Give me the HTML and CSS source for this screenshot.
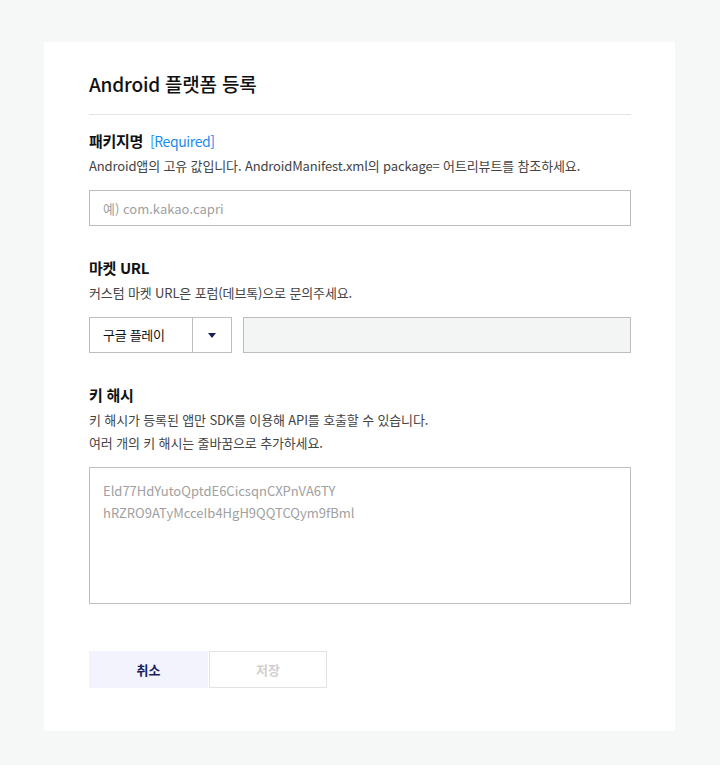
FILE: index.html
```html
<!DOCTYPE html>
<html lang="ko">
<head>
    <meta charset="UTF-8">
    <meta name="viewport" content="width=device-width, initial-scale=1.0">
    <title>Android 플랫폼 등록</title>
    <link rel="stylesheet" href="styles.css">
</head>
<body>
    <div class="card">
        <h2 class="title">Android 플랫폼 등록</h2>

        <div class="field first">
            <p class="label">패키지명 <span class="required">[Required]</span></p>
            <p class="desc">Android앱의 고유 값입니다. AndroidManifest.xml의 package= 어트리뷰트를 참조하세요.</p>
            <input class="text" type="text" placeholder="예) com.kakao.capri">
        </div>

        <div class="field">
            <p class="label">마켓 URL</p>
            <p class="desc">커스텀 마켓 URL은 포럼(데브톡)으로 문의주세요.</p>
            <div class="market">
                <div class="select">
                    <span class="select-text">구글 플레이</span>
                    <span class="select-arrow">
                        <svg width="8" height="5" viewBox="0 0 8 5"><path d="M0 0h8L4 5z" fill="#1b1e5c"/></svg>
                    </span>
                </div>
                <input class="text url" type="text" disabled>
            </div>
        </div>

        <div class="field">
            <p class="label">키 해시</p>
            <p class="desc">키 해시가 등록된 앱만 SDK를 이용해 API를 호출할 수 있습니다.<br>여러 개의 키 해시는 줄바꿈으로 추가하세요.</p>
            <textarea class="hash" placeholder="Eld77HdYutoQptdE6CicsqnCXPnVA6TY&#10;hRZRO9ATyMcceIb4HgH9QQTCQym9fBml"></textarea>
        </div>

        <div class="buttons">
            <button class="btn cancel">취소</button>
            <button class="btn save" disabled>저장</button>
        </div>
    </div>
</body>
</html>
```

FILE: styles.css
```css
body {
    margin: 0;
    background: #f6f7f7;
    font-family: "Noto Sans CJK KR", "Noto Sans", sans-serif;
    color: #111;
}

p { margin: 0; }

.card {
    margin: 42px 45px 34px 44px;
    background: #fff;
    padding: 28px 44px 43px 45px;
}

.title {
    margin: 0;
    font-size: 19px;
    font-weight: 500;
    line-height: 28px;
    padding-bottom: 16px;
    border-bottom: 1px solid #e4e4e4;
    letter-spacing: -0.2px;
}

.field { margin-top: 31px; }
.field.first { margin-top: 15px; }

.label {
    font-size: 15px;
    font-weight: 700;
    line-height: 22px;
    letter-spacing: -0.3px;
}

.required {
    color: #1a8cf0;
    font-weight: 400;
    font-size: 14px;
    margin-left: 3px;
    letter-spacing: -0.4px;
}

.desc {
    margin-top: 2px;
    font-size: 13px;
    line-height: 23px;
    color: #444;
    letter-spacing: -0.14px;
}

.text {
    display: block;
    box-sizing: border-box;
    width: 100%;
    height: 36px;
    margin-top: 13px;
    padding: 0 13px;
    border: 1px solid #bdbdbd;
    border-radius: 0;
    font-family: inherit;
    font-size: 13px;
    color: #333;
    outline: none;
}

.text::placeholder { color: #a0a0a0; }

.market {
    display: flex;
    gap: 11px;
    margin-top: 13px;
}

.select {
    display: flex;
    box-sizing: border-box;
    width: 143px;
    height: 36px;
    border: 1px solid #bdbdbd;
    flex-shrink: 0;
}

.select-text {
    flex: 1;
    padding-left: 13px;
    font-size: 13px;
    line-height: 34px;
    letter-spacing: -0.3px;
    border-right: 1px solid #bdbdbd;
}

.select-arrow {
    width: 38px;
    display: flex;
    align-items: center;
    justify-content: center;
}

.text.url {
    margin-top: 0;
    flex: 1;
    background: #f3f4f4;
}

.hash {
    display: block;
    box-sizing: border-box;
    width: 100%;
    height: 137px;
    margin-top: 13px;
    padding: 12px 13px;
    border: 1px solid #bdbdbd;
    border-radius: 0;
    resize: none;
    font-family: inherit;
    font-size: 13px;
    line-height: 22px;
    outline: none;
}

.hash::placeholder { color: #a0a0a0; }

.buttons {
    display: flex;
    margin-top: 47px;
}

.btn {
    box-sizing: border-box;
    width: 119px;
    height: 37px;
    border: 1px solid transparent;
    font-family: inherit;
    font-size: 13px;
    font-weight: 700;
    padding: 0;
}

.btn.cancel {
    background: #f2f3fc;
    color: #1b1e5c;
}

.btn.save {
    width: 118px;
    background: #fff;
    border-color: #e2e2e2;
    color: #d0d0d0;
    margin-left: 1px;
}
```
